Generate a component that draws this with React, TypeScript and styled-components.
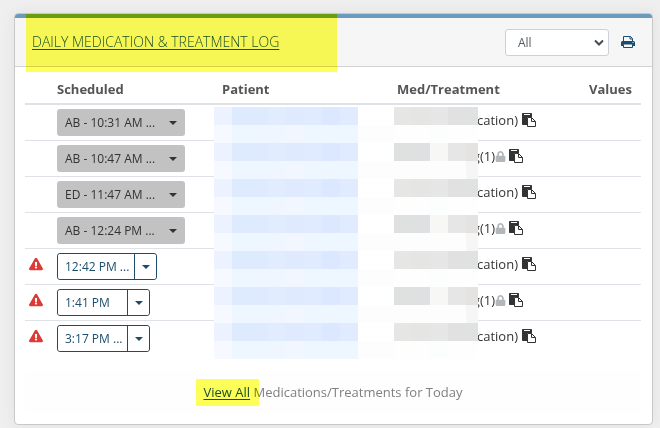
import React from "react";
import styled, { createGlobalStyle, css } from "styled-components";
import { FaExclamationTriangle, FaLock } from "react-icons/fa";

const GlobalStyle = createGlobalStyle`
  * { box-sizing: border-box; }
  body {
    margin: 0;
    background: #efefef;
    color: #333;
    font-family: "Open Sans", "Noto Sans", sans-serif;
    font-size: 13px;
    line-height: 20px;
  }
  button, select { font-family: inherit; }
`;

const Page = styled.main`
  padding: 13px 7px 3px 14px;
`;

const Card = styled.section`
  background: #fff;
  border: 1px solid #c8c8c8;
  border-radius: 4px;
  box-shadow: 0 0 16px rgba(0, 0, 0, 0.06);
`;

const CardHeader = styled.header`
  position: relative;
  display: flex;
  align-items: center;
  height: 53px;
  padding: 0 17px;
  background: #f6f6f6;
  border-top: 4px solid #6a9bbd;
  border-bottom: 1px solid #d3d3d3;
  border-radius: 3px 3px 0 0;
`;

const TitleMarker = styled.span`
  position: absolute;
  z-index: 2;
  top: -4px;
  left: 11px;
  width: 311px;
  height: 58px;
  background: linear-gradient(#ffff1c 4px, #ffff58 4px);
  mix-blend-mode: multiply;
  pointer-events: none;
`;

const TextLink = styled.a`
  color: #1a4d6d;
  text-decoration: underline;
  text-underline-offset: 2px;
`;

const Title = styled.h1`
  flex: 1;
  margin: 0;
  font-size: 14px;
  font-weight: 300;
`;

const SelectBox = styled.label`
  position: relative;
  display: flex;
  width: 104px;
  margin-right: 12px;
`;

const Select = styled.select`
  width: 100%;
  height: 27px;
  padding: 0 12px;
  appearance: none;
  background: #fff;
  border: 1px solid #ccd0d8;
  border-radius: 3px;
  color: #555b62;
  font-size: 12px;
`;

const Chevron = styled.svg`
  position: absolute;
  top: 10px;
  right: 5px;
  width: 10px;
  height: 7px;
  pointer-events: none;
`;

const IconButton = styled.button<{ $tone?: string }>`
  display: inline-flex;
  padding: 0;
  background: none;
  border: 0;
  color: ${(p) => p.$tone ?? "#333"};
`;

const Body = styled.div`
  padding: 11px 11px 10px 10px;
`;

const Table = styled.table`
  width: 100%;
  table-layout: fixed;
  border-collapse: separate;
  border-spacing: 0;
`;

const Column = styled.col<{ $width: number }>`
  width: ${(p) => p.$width}px;
`;

const HeadCell = styled.th`
  height: 27px;
  padding: 0 8px 4px;
  border-bottom: 2px solid #dee2e6;
  color: #555;
  font-weight: 700;
  line-height: 20px;
  text-align: left;
`;

const Cell = styled.td<{ $flush?: boolean }>`
  position: relative;
  height: 36px;
  padding: ${(p) => (p.$flush ? "4px" : "4px 0 4px 8px")};
  border-bottom: 1px solid #dee2e6;
  vertical-align: top;
  white-space: nowrap;
  tr:last-child > & { border-bottom-color: transparent; }
`;

const Warning = styled(FaExclamationTriangle)`
  display: block;
  margin-top: 4px;
  color: #dc3a36;
  font-size: 14px;
`;

const buttonText = css`
  height: 27px;
  font-size: 12px;
  line-height: 18px;
`;

const DoneButton = styled.button`
  ${buttonText}
  display: inline-flex;
  align-items: center;
  justify-content: space-between;
  min-width: 128px;
  padding: 0 8px;
  background: #c2c2c2;
  border: 0;
  border-radius: 3px;
  color: #333;
`;

const SplitButton = styled.div`
  display: inline-flex;
  border: 1px solid #1a4d6d;
  border-radius: 3px;
`;

const SplitPart = styled.button<{ $caret?: boolean }>`
  ${buttonText}
  display: flex;
  align-items: center;
  height: 25px;
  min-width: ${(p) => (p.$caret ? "22px" : "69px")};
  justify-content: ${(p) => (p.$caret ? "center" : "flex-start")};
  padding: ${(p) => (p.$caret ? "0" : "0 5px 0 7px")};
  background: #fff;
  border: 0;
  border-left: ${(p) => (p.$caret ? "1px solid #1a4d6d" : "0")};
  border-radius: ${(p) => (p.$caret ? "0 3px 3px 0" : "3px 0 0 3px")};
  color: #1a4d6d;
`;

const Caret = styled.span`
  border: 4px solid transparent;
  border-top-color: currentColor;
  border-bottom: 0;
`;

const Redaction = styled.div`
  position: absolute;
  z-index: 1;
  top: 2px;
  left: 0;
  display: grid;
  grid-template-columns: repeat(8, 18px) 36px repeat(4, 18px) 12px;
  grid-template-rows: 18px 18px;
`;

const Tile = styled.span<{ $tone: string }>`
  background: ${(p) => p.$tone};
`;

const Treatment = styled.div`
  display: flex;
  align-items: center;
  height: 22px;
`;

const TreatmentText = styled.span<{ $locked: boolean }>`
  width: ${(p) => (p.$locked ? "98px" : "121px")};
  margin-right: ${(p) => (p.$locked ? "0" : "4px")};
  text-align: right;
`;

const Lock = styled(FaLock)`
  margin-right: 3px;
  color: #b3b7ba;
  font-size: 11px;
`;

const GlyphDrawing = styled.svg`
  width: 14px;
  height: 14px;
`;

const Summary = styled.footer`
  margin-top: 13px;
  padding: 12px;
  background: #fefefe;
  border-radius: 4px;
  color: #808080;
  text-align: center;
`;

const Marked = styled.span`
  position: relative;
  &::after {
    content: "";
    position: absolute;
    inset: -4px -9px -5px -7px;
    background: #ffff58;
    mix-blend-mode: multiply;
    pointer-events: none;
  }
`;

const patientTiles = [
  "#ecf2ff", "#deebff", "#deebff", "#e1edff", "#dfeaff", "#e0ebff", "#dce8ff", "#e0ebff", "#fff",
];
const patientFade = [
  "#f6f9ff", "#eef6ff", "#eef6ff", "#eff6ff", "#f2f6ff", "#eef6ff", "#eef6ff", "#eef6ff", "#fdfdfd",
];
const openTiles = ["#e6e6e5", "#e5e5e4", "#e6e6e6", "#e0e1e0", "#dfe2e1"];
const openFade = ["#fefefe", "#fefefe", "#fbfefd", "#fefefe", "#fefefe"];
const lockedTiles = ["#dfe1e1", "#dfe0e2", "#f7f8f6", "#e6e6e6", "#e4e3e2"];
const lockedFade = ["#fdfdfd", "#fdfdfd", "#fdfdfd", "#fdfdfd", "#f6f6f6"];

type Entry = { time: string; done: boolean; locked: boolean };

const entries: Entry[] = [
  { time: "AB - 10:31 AM ...", done: true, locked: false },
  { time: "AB - 10:47 AM ...", done: true, locked: true },
  { time: "ED - 11:47 AM ...", done: true, locked: false },
  { time: "AB - 12:24 PM ...", done: true, locked: true },
  { time: "12:42 PM ...", done: false, locked: false },
  { time: "1:41 PM", done: false, locked: true },
  { time: "3:17 PM ...", done: false, locked: false },
];

function PasteIcon() {
  return (
    <GlyphDrawing viewBox="0 0 14 14" aria-hidden="true">
      <path
        fill="currentColor"
        fillRule="evenodd"
        d="M.8 0h8.4q.8 0 .8.8V4H6.2Q5 4 5 5.2V12H.8Q0 12 0 11.2V.8Q0 0 .8 0zM2 1v1h6V1z"
      />
      <path
        fill="#fff"
        stroke="currentColor"
        d="M5.5 4.5H9.5L13.5 8.5v5h-8zM9.5 4.5v4h4"
      />
    </GlyphDrawing>
  );
}

function PrintIcon() {
  return (
    <GlyphDrawing viewBox="0 0 14 14" aria-hidden="true">
      <path fill="none" stroke="currentColor" d="M2.5 7V1.5h7l2 2V7M9 1.5V4h2.5" />
      <path
        fill="currentColor"
        fillRule="evenodd"
        d="M1.5 6h11Q14 6 14 7.5V11h-2.5V9.5h-9V11H0V7.5Q0 6 1.5 6zM11.5 7v1h1V7z"
      />
      <path fill="none" stroke="currentColor" d="M2.5 9.5v3h9v-3" />
    </GlyphDrawing>
  );
}

function RedactedDetails({ locked }: { locked: boolean }) {
  const tiles = [
    ...patientTiles,
    ...(locked ? lockedTiles : openTiles),
    ...patientFade,
    ...(locked ? lockedFade : openFade),
  ];
  return (
    <Redaction aria-hidden="true">
      {tiles.map((tone, i) => (
        <Tile key={i} $tone={tone} />
      ))}
    </Redaction>
  );
}

function EntryRow({ time, done, locked }: Entry) {
  return (
    <tr>
      <Cell $flush>{!done && <Warning title="Overdue" />}</Cell>
      <Cell>
        {done ? (
          <DoneButton type="button">
            {time}
            <Caret />
          </DoneButton>
        ) : (
          <SplitButton>
            <SplitPart type="button">{time}</SplitPart>
            <SplitPart type="button" $caret aria-label="More options">
              <Caret />
            </SplitPart>
          </SplitButton>
        )}
      </Cell>
      <Cell>
        <RedactedDetails locked={locked} />
      </Cell>
      <Cell>
        <Treatment>
          <TreatmentText $locked={locked}>{locked ? "g(1)" : "cation)"}</TreatmentText>
          {locked && <Lock />}
          <IconButton type="button" aria-label="Copy">
            <PasteIcon />
          </IconButton>
        </Treatment>
      </Cell>
      <Cell />
    </tr>
  );
}

export default function App() {
  return (
    <>
      <GlobalStyle />
      <Page>
        <Card>
          <CardHeader>
            <Title>
              <TextLink href="#log">DAILY MEDICATION &amp; TREATMENT LOG</TextLink>
            </Title>
            <SelectBox>
              <Select aria-label="Filter" defaultValue="All">
                <option>All</option>
              </Select>
              <Chevron viewBox="0 0 10 7" fill="none" stroke="#444b52" strokeWidth="2">
                <path d="M1 1.5l4 4 4-4" />
              </Chevron>
            </SelectBox>
            <IconButton type="button" $tone="#1a4d6d" aria-label="Print">
              <PrintIcon />
            </IconButton>
            <TitleMarker />
          </CardHeader>
          <Body>
            <Table>
              <colgroup>
                <Column $width={24} />
                <Column $width={165} />
                <Column $width={175} />
                <Column $width={192} />
                <Column $width={60} />
              </colgroup>
              <thead>
                <tr>
                  <HeadCell aria-label="Status" />
                  <HeadCell>Scheduled</HeadCell>
                  <HeadCell>Patient</HeadCell>
                  <HeadCell>Med/Treatment</HeadCell>
                  <HeadCell>Values</HeadCell>
                </tr>
              </thead>
              <tbody>
                {entries.map((entry) => (
                  <EntryRow key={entry.time} {...entry} />
                ))}
              </tbody>
            </Table>
            <Summary>
              <Marked>
                <TextLink href="#all">View All</TextLink>
              </Marked>{" "}
              Medications/Treatments for Today
            </Summary>
          </Body>
        </Card>
      </Page>
    </>
  );
}
